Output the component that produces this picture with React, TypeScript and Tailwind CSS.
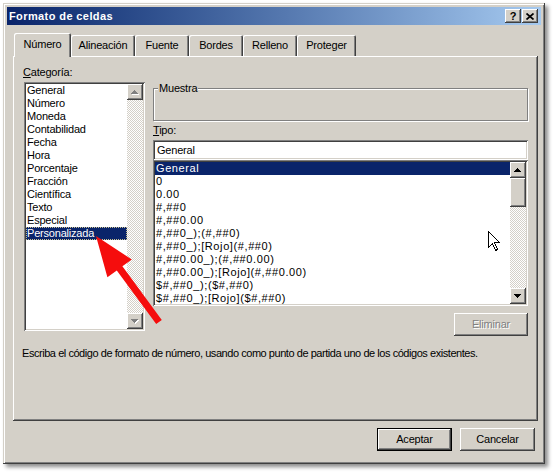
import React from "react";

const raised =
  "shadow-[inset_-1px_-1px_#404040,inset_1px_1px_#ffffff,inset_-2px_-2px_#808080]";
const sunken =
  "shadow-[inset_1px_1px_#808080,inset_-1px_-1px_#ffffff,inset_2px_2px_#404040,inset_-2px_-2px_#d4d0c8]";
const checker =
  "bg-[image:repeating-conic-gradient(#d4d0c8_0_25%,#ffffff_0_50%)] bg-[length:2px_2px]";

const categories = [
  "General",
  "Número",
  "Moneda",
  "Contabilidad",
  "Fecha",
  "Hora",
  "Porcentaje",
  "Fracción",
  "Científica",
  "Texto",
  "Especial",
  "Personalizada",
];

const types = [
  "General",
  "0",
  "0.00",
  "#,##0",
  "#,##0.00",
  "#,##0_);(#,##0)",
  "#,##0_);[Rojo](#,##0)",
  "#,##0.00_);(#,##0.00)",
  "#,##0.00_);[Rojo](#,##0.00)",
  "$#,##0_);($#,##0)",
  "$#,##0_);[Rojo]($#,##0)",
];

const tabs = [
  { label: "Número", w: "w-[57px]" },
  { label: "Alineación", w: "w-[64px]" },
  { label: "Fuente", w: "w-[54px]" },
  { label: "Bordes", w: "w-[54px]" },
  { label: "Relleno", w: "w-[54px]" },
  { label: "Proteger", w: "w-[59px]" },
];

// little 7x4 pixel triangle used on scroll buttons
const Arrow = ({ up, disabled }: { up?: boolean; disabled?: boolean }) => {
  const rows = up
    ? [
        [3, 0, 1],
        [2, 1, 3],
        [1, 2, 5],
        [0, 3, 7],
      ]
    : [
        [0, 0, 7],
        [1, 1, 5],
        [2, 2, 3],
        [3, 3, 1],
      ];
  return (
    <svg width="8" height="5" viewBox="0 0 8 5" shapeRendering="crispEdges">
      {disabled &&
        rows.map(([x, y, w], i) => (
          <rect key={"s" + i} x={x + 1} y={y + 1} width={w} height={1} fill="#ffffff" />
        ))}
      {rows.map(([x, y, w], i) => (
        <rect key={i} x={x} y={y} width={w} height={1} fill={disabled ? "#808080" : "#000000"} />
      ))}
    </svg>
  );
};

const ScrollBtn = ({ up, disabled }: { up?: boolean; disabled?: boolean }) => (
  <div className={`w-[16px] h-[16px] shrink-0 bg-[#d4d0c8] flex items-center justify-center ${raised}`}>
    <Arrow up={up} disabled={disabled} />
  </div>
);

const Scrollbar = ({ disabled }: { disabled?: boolean }) => (
  <div className="w-[16px] flex flex-col shrink-0">
    <ScrollBtn up disabled={disabled} />
    {!disabled && <div className={`h-[29px] shrink-0 bg-[#d4d0c8] ${raised}`} />}
    <div className={`flex-1 ${checker}`} />
    <ScrollBtn disabled={disabled} />
  </div>
);

const App = () => {
  return (
    <div className="relative w-[556px] h-[472px] bg-white overflow-hidden pl-[3px] pt-[3px] font-['Liberation_Sans',Arial,sans-serif] text-[11px] leading-[13px] tracking-[-0.2px] text-black">
      {/* window */}
      <div className="w-[542px] h-[461px] bg-[#d4d0c8] p-[4px] flex flex-col shadow-[inset_-1px_-1px_#404040,inset_1px_1px_#d4d0c8,inset_2px_2px_#ffffff,inset_-2px_-2px_#808080,3px_3px_4px_rgba(0,0,0,0.45)]">
        {/* title bar */}
        <div className="h-[18px] shrink-0 flex items-center bg-linear-to-r from-[#0a246a] to-[#a6caf0] pl-[2px] pr-[3px]">
          <span className="flex-1 text-white font-bold tracking-[0.4px]">Formato de celdas</span>
          <div className="flex gap-[1px]">
            <div className={`w-[16px] h-[14px] bg-[#d4d0c8] flex items-center justify-center font-bold text-[11px] leading-[11px] ${raised}`}>
              ?
            </div>
            <div className={`w-[16px] h-[14px] bg-[#d4d0c8] flex items-center justify-center ${raised}`}>
              <svg width="8" height="7" viewBox="0 0 8 7">
                <path d="M0.5 0.5 L7.5 6.5 M7.5 0.5 L0.5 6.5" stroke="#000" strokeWidth="1.7" />
              </svg>
            </div>
          </div>
        </div>

        <div className="pl-[6px] mt-[8px] flex flex-col">
          {/* tabs */}
          <div className="h-[23px] flex items-end pl-[1px]">
            {tabs.map((t, i) => (
              <div
                key={t.label}
                className={`${t.w} flex items-center justify-center bg-[#d4d0c8] rounded-t-[2px] shadow-[inset_1px_1px_#ffffff,inset_-1px_0_#404040,inset_-2px_0_#808080] ${
                  i === 0 ? "relative z-10 h-[24px] -mb-px pb-[1px]" : "h-[21px]"
                }`}
              >
                {t.label}
              </div>
            ))}
          </div>

          {/* panel */}
          <div className={`w-[525px] h-[365px] pl-[11px] pt-[10px] ${raised}`}>
            <div className="flex">
              {/* categories */}
              <div className="w-[121px] flex flex-col">
                <div className="h-[13px] -ml-px">
                  <span className="underline">C</span>ategoría:
                </div>
                <div className={`mt-[3px] h-[249px] bg-white p-[2px] flex ${sunken}`}>
                  <div className="flex-1 flex flex-col">
                    {categories.map((c) => (
                      <div
                        key={c}
                        className={`h-[13px] pl-[1px] whitespace-nowrap ${
                          c === "Personalizada"
                            ? "bg-[#0a246a] text-white outline-1 outline-dotted outline-[#c8c090] -outline-offset-1"
                            : ""
                        }`}
                      >
                        {c}
                      </div>
                    ))}
                  </div>
                  <Scrollbar disabled />
                </div>
              </div>

              {/* right side */}
              <div className="ml-[8px] w-[375px] flex flex-col">
                <div className="relative mt-[22px] h-[33px] border border-[#808080] shadow-[inset_1px_1px_#ffffff,1px_1px_#ffffff]">
                  <span className="absolute left-[4px] -top-[7px] bg-[#d4d0c8] px-[1px]">Muestra</span>
                </div>
                <div className="mt-[3px] h-[13px]">
                  <span className="underline">T</span>ipo:
                </div>
                <div className={`mt-[3px] h-[20px] bg-white pl-[4px] flex items-center ${sunken}`}>General</div>
                <div className={`h-[146px] bg-white p-[2px] flex ${sunken}`}>
                  <div className="flex-1 flex flex-col overflow-hidden tracking-[0.6px]">
                    {types.map((t, i) => (
                      <div
                        key={t}
                        className={`h-[13px] shrink-0 pl-[1px] whitespace-nowrap ${i === 0 ? "bg-[#0a246a] text-white" : ""}`}
                      >
                        {t}
                      </div>
                    ))}
                  </div>
                  <Scrollbar />
                </div>
                <div
                  className={`self-end mt-[7px] w-[74px] h-[23px] flex items-center justify-center text-[#808080] [text-shadow:1px_1px_0_#ffffff] ${raised}`}
                >
                  Eliminar
                </div>
              </div>
            </div>

            <p className="mt-[11px] -ml-[2px] tracking-[-0.45px]">
              Escriba el código de formato de número, usando como punto de partida uno de los códigos existentes.
            </p>
          </div>

          {/* buttons */}
          <div className="mt-[7px] w-[525px] flex justify-end gap-[8px] pr-[3px]">
            <button className="w-[75px] h-[23px] border border-black bg-[#d4d0c8] shadow-[inset_-1px_-1px_#404040,inset_1px_1px_#ffffff,inset_-2px_-2px_#808080]">
              Aceptar
            </button>
            <button className={`w-[75px] h-[23px] bg-[#d4d0c8] ${raised}`}>Cancelar</button>
          </div>
        </div>
      </div>

      {/* mouse pointer */}
      <svg className="absolute left-[488px] top-[231px]" width="13" height="21" viewBox="0 0 13 21" shapeRendering="crispEdges">
        <path d="M0.5 0.5 L0.5 16.5 L4.5 12.5 L7.5 19.5 L9.5 18.5 L6.5 11.5 L11.5 11.5 Z" fill="#ffffff" stroke="#000000" strokeWidth="1" />
      </svg>

      {/* red annotation arrow */}
      <svg className="absolute left-0 top-0 pointer-events-none" width="556" height="472">
        <polygon
          points="96,236 131.8,259.5 122.4,266.3 161.8,319.9 156.2,324.1 116.8,270.5 107.4,277.3"
          fill="#f50d0d"
        />
      </svg>
    </div>
  );
};

export default App;
